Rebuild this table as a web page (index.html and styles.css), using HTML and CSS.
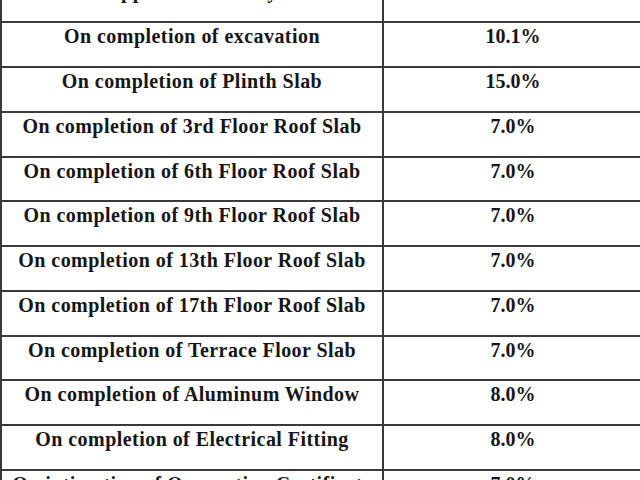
FILE: index.html
```html
<!DOCTYPE html>
<html>
<head>
<meta charset="utf-8">
<link rel="stylesheet" href="styles.css">
</head>
<body>
<table class="plan">
  <tr class="head"><td class="stage">Application Money</td><td class="pct"></td></tr>
  <tr><td class="stage">On completion of excavation</td><td class="pct">10.1%</td></tr>
  <tr><td class="stage">On completion of Plinth Slab</td><td class="pct">15.0%</td></tr>
  <tr><td class="stage">On completion of 3rd Floor Roof Slab</td><td class="pct">7.0%</td></tr>
  <tr><td class="stage">On completion of 6th Floor Roof Slab</td><td class="pct">7.0%</td></tr>
  <tr><td class="stage">On completion of 9th Floor Roof Slab</td><td class="pct">7.0%</td></tr>
  <tr><td class="stage">On completion of 13th Floor Roof Slab</td><td class="pct">7.0%</td></tr>
  <tr><td class="stage">On completion of 17th Floor Roof Slab</td><td class="pct">7.0%</td></tr>
  <tr><td class="stage">On completion of Terrace Floor Slab</td><td class="pct">7.0%</td></tr>
  <tr><td class="stage">On completion of Aluminum Window</td><td class="pct">8.0%</td></tr>
  <tr><td class="stage">On completion of Electrical Fitting</td><td class="pct">8.0%</td></tr>
  <tr><td class="stage">On intimation of Occupation Certificate</td><td class="pct">7.0%</td></tr>
</table>
</body>
</html>
```
FILE: styles.css
```css
html, body {
  margin: 0;
  padding: 0;
  background: #ffffff;
  overflow: hidden;
}
.plan {
  border-collapse: collapse;
  margin-top: -23.7px;
  width: 644px;
  table-layout: fixed;
  font-family: "Liberation Serif", "Times New Roman", serif;
  font-weight: bold;
  font-size: 20px;
  color: #161616;
}
.plan tr {
  height: 44.8px;
}
.plan td {
  border: 2px solid #3a3a3a;
  vertical-align: top;
  text-align: center;
  padding: 2px 0 0 0;
  line-height: 22px;
  white-space: nowrap;
}
.plan .stage {
  width: 380px;
  letter-spacing: 0.45px;
}
.plan .pct {
  letter-spacing: 0;
}
```
